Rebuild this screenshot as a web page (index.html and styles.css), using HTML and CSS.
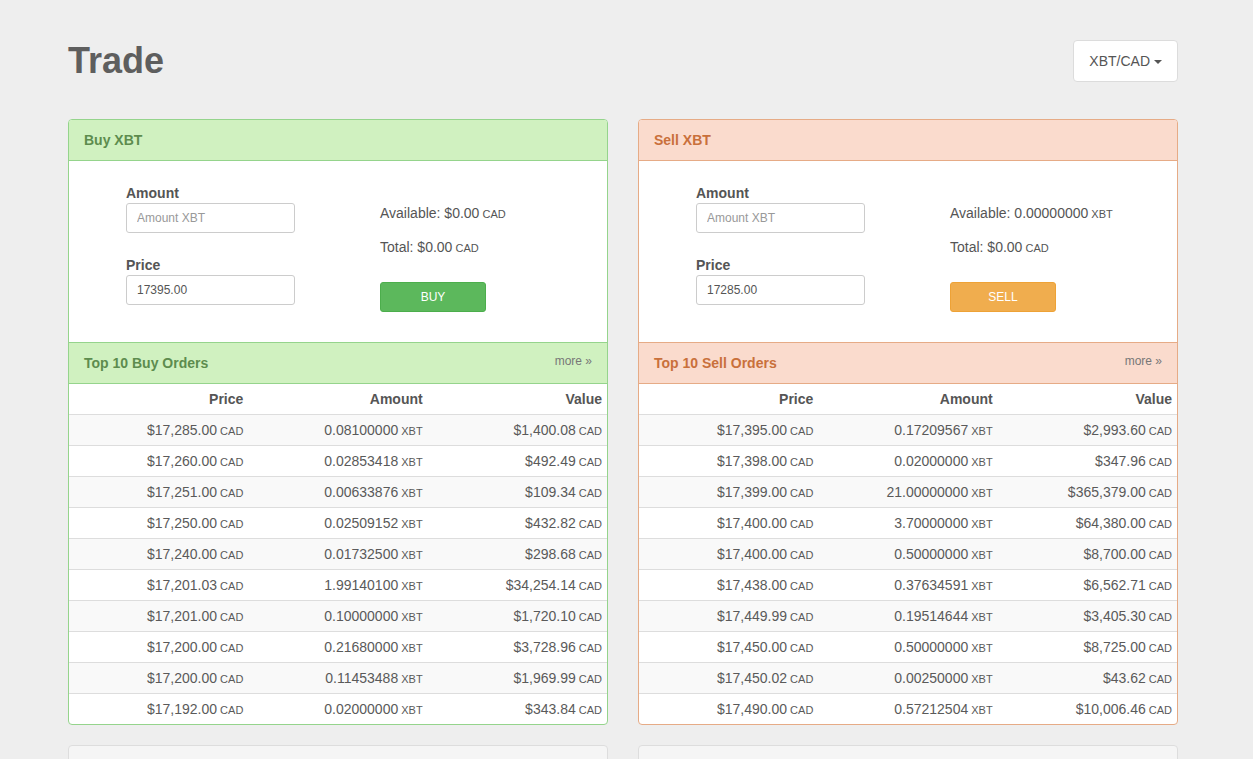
FILE: index.html
```html
<!DOCTYPE html>
<html>
<head>
<meta charset="utf-8">
<title>Trade</title>
<link rel="stylesheet" href="styles.css">
</head>
<body>
<div class="page">
  <div class="page-header">
    <h1>Trade</h1>
    <button class="pair-btn">XBT/CAD <span class="caret"></span></button>
  </div>

  <div class="columns">
    <div class="panel panel-buy">
      <div class="panel-heading">Buy XBT</div>
      <div class="trade-form">
        <div class="fields">
          <label>Amount</label>
          <input class="input" type="text" placeholder="Amount XBT">
          <label class="second">Price</label>
          <input class="input" type="text" value="17395.00">
        </div>
        <div class="summary">
          <p class="avail">Available: $0.00<small> CAD</small></p>
          <p class="total">Total: $0.00<small> CAD</small></p>
          <button class="btn btn-buy">BUY</button>
        </div>
      </div>
      <div class="panel-heading sub">Top 10 Buy Orders <a class="more">more »</a></div>
      <table class="orders">
        <thead><tr><th>Price</th><th>Amount</th><th>Value</th></tr></thead>
        <tbody>
          <tr><td>$17,285.00<small> CAD</small></td><td>0.08100000<small> XBT</small></td><td>$1,400.08<small> CAD</small></td></tr>
          <tr><td>$17,260.00<small> CAD</small></td><td>0.02853418<small> XBT</small></td><td>$492.49<small> CAD</small></td></tr>
          <tr><td>$17,251.00<small> CAD</small></td><td>0.00633876<small> XBT</small></td><td>$109.34<small> CAD</small></td></tr>
          <tr><td>$17,250.00<small> CAD</small></td><td>0.02509152<small> XBT</small></td><td>$432.82<small> CAD</small></td></tr>
          <tr><td>$17,240.00<small> CAD</small></td><td>0.01732500<small> XBT</small></td><td>$298.68<small> CAD</small></td></tr>
          <tr><td>$17,201.03<small> CAD</small></td><td>1.99140100<small> XBT</small></td><td>$34,254.14<small> CAD</small></td></tr>
          <tr><td>$17,201.00<small> CAD</small></td><td>0.10000000<small> XBT</small></td><td>$1,720.10<small> CAD</small></td></tr>
          <tr><td>$17,200.00<small> CAD</small></td><td>0.21680000<small> XBT</small></td><td>$3,728.96<small> CAD</small></td></tr>
          <tr><td>$17,200.00<small> CAD</small></td><td>0.11453488<small> XBT</small></td><td>$1,969.99<small> CAD</small></td></tr>
          <tr><td>$17,192.00<small> CAD</small></td><td>0.02000000<small> XBT</small></td><td>$343.84<small> CAD</small></td></tr>
        </tbody>
      </table>
    </div>

    <div class="panel panel-sell">
      <div class="panel-heading">Sell XBT</div>
      <div class="trade-form">
        <div class="fields">
          <label>Amount</label>
          <input class="input" type="text" placeholder="Amount XBT">
          <label class="second">Price</label>
          <input class="input" type="text" value="17285.00">
        </div>
        <div class="summary">
          <p class="avail">Available: 0.00000000<small> XBT</small></p>
          <p class="total">Total: $0.00<small> CAD</small></p>
          <button class="btn btn-sell">SELL</button>
        </div>
      </div>
      <div class="panel-heading sub">Top 10 Sell Orders <a class="more">more »</a></div>
      <table class="orders">
        <thead><tr><th>Price</th><th>Amount</th><th>Value</th></tr></thead>
        <tbody>
          <tr><td>$17,395.00<small> CAD</small></td><td>0.17209567<small> XBT</small></td><td>$2,993.60<small> CAD</small></td></tr>
          <tr><td>$17,398.00<small> CAD</small></td><td>0.02000000<small> XBT</small></td><td>$347.96<small> CAD</small></td></tr>
          <tr><td>$17,399.00<small> CAD</small></td><td>21.00000000<small> XBT</small></td><td>$365,379.00<small> CAD</small></td></tr>
          <tr><td>$17,400.00<small> CAD</small></td><td>3.70000000<small> XBT</small></td><td>$64,380.00<small> CAD</small></td></tr>
          <tr><td>$17,400.00<small> CAD</small></td><td>0.50000000<small> XBT</small></td><td>$8,700.00<small> CAD</small></td></tr>
          <tr><td>$17,438.00<small> CAD</small></td><td>0.37634591<small> XBT</small></td><td>$6,562.71<small> CAD</small></td></tr>
          <tr><td>$17,449.99<small> CAD</small></td><td>0.19514644<small> XBT</small></td><td>$3,405.30<small> CAD</small></td></tr>
          <tr><td>$17,450.00<small> CAD</small></td><td>0.50000000<small> XBT</small></td><td>$8,725.00<small> CAD</small></td></tr>
          <tr><td>$17,450.02<small> CAD</small></td><td>0.00250000<small> XBT</small></td><td>$43.62<small> CAD</small></td></tr>
          <tr><td>$17,490.00<small> CAD</small></td><td>0.57212504<small> XBT</small></td><td>$10,006.46<small> CAD</small></td></tr>
        </tbody>
      </table>
    </div>

    <div class="panel panel-plain"></div>
    <div class="panel panel-plain"></div>
  </div>
</div>
</body>
</html>
```

FILE: styles.css
```css
* { box-sizing: border-box; }
html, body { margin: 0; padding: 0; }
body {
  background: #eeeeee;
  font-family: "Liberation Sans", Arial, sans-serif;
  font-size: 14px;
  line-height: 20px;
  color: #555555;
  overflow: hidden;
}
.page {
  padding: 40px 75px 0 68px;
}
.page-header {
  display: flex;
  justify-content: space-between;
  align-items: center;
  height: 41px;
  margin-bottom: 38px;
}
.page-header h1 {
  margin: 0;
  font-size: 36px;
  line-height: 40px;
  font-weight: bold;
  color: #5e5e5e;
}
.pair-btn {
  height: 42px;
  padding: 0 15px;
  font-family: inherit;
  font-size: 14px;
  color: #555;
  background: #fff;
  border: 1px solid #dcdcdc;
  border-radius: 4px;
  display: flex;
  align-items: center;
  gap: 4px;
}
.caret {
  display: inline-block;
  width: 0;
  height: 0;
  border-top: 4px solid #555;
  border-left: 4px solid transparent;
  border-right: 4px solid transparent;
  margin-top: 2px;
}
.columns {
  display: grid;
  grid-template-columns: 540px 540px;
  column-gap: 30px;
  row-gap: 20px;
}
.panel {
  border: 1px solid #ddd;
  border-radius: 4px;
  background: #fff;
  overflow: hidden;
}
.panel-heading {
  padding: 10px 15px;
  line-height: 20px;
  font-weight: bold;
  font-size: 14px;
}
.panel-heading.sub { border-top: 1px solid; }
.panel-buy { border-color: #95d48c; }
.panel-buy .panel-heading {
  background: #d0f1c0;
  color: #5d8c4e;
  border-bottom: 1px solid #95d48c;
  border-top-color: #95d48c;
}
.panel-sell { border-color: #e6ab86; }
.panel-sell .panel-heading {
  background: #fadbcd;
  color: #c9703b;
  border-bottom: 1px solid #e6ab86;
  border-top-color: #e6ab86;
}
.more {
  float: right;
  font-weight: normal;
  font-size: 12px;
  color: #777;
  line-height: 16px;
}
.trade-form {
  display: grid;
  grid-template-columns: 254px 1fr;
  align-items: start;
  padding: 22px 0 30px 57px;
}
.fields {
  display: flex;
  flex-direction: column;
  align-items: flex-start;
}
.fields label {
  font-weight: bold;
  line-height: 20px;
}
.fields label.second { margin-top: 22px; }
.input {
  width: 169px;
  height: 30px;
  padding: 5px 10px;
  font-family: inherit;
  font-size: 12px;
  color: #555;
  border: 1px solid #ccc;
  border-radius: 3px;
  background: #fff;
  outline: none;
}
.input::placeholder { color: #999; }
.summary { padding-top: 20px; }
.summary p { margin: 0; line-height: 20px; height: 20px; }
.summary .avail { margin-bottom: 14px; }
.summary .total { margin-bottom: 25px; }
small { font-size: 11px; line-height: 1; }
.btn {
  display: block;
  width: 106px;
  height: 30px;
  font-family: inherit;
  font-size: 12px;
  color: #fff;
  border-radius: 3px;
  border: 1px solid;
  padding: 0;
}
.btn-buy { background: #5cb85c; border-color: #4cae4c; }
.btn-sell { background: #f0ad4e; border-color: #eea236; }
.orders {
  width: 100%;
  border-collapse: collapse;
  table-layout: fixed;
}
.orders th, .orders td {
  padding: 5px;
  text-align: right;
  line-height: 20px;
  height: 30px;
}
.orders th {
  font-weight: bold;
  border-bottom: 1px solid #ddd;
}
.orders td { border-bottom: 1px solid #ddd; color: #5a5a5a; }
.orders tbody tr:last-child td { border-bottom: none; }
.orders tbody tr:nth-child(odd) td { background: #f9f9f9; }
.panel-plain {
  height: 60px;
  background: #f5f5f5;
  border-color: #ddd;
}
```
